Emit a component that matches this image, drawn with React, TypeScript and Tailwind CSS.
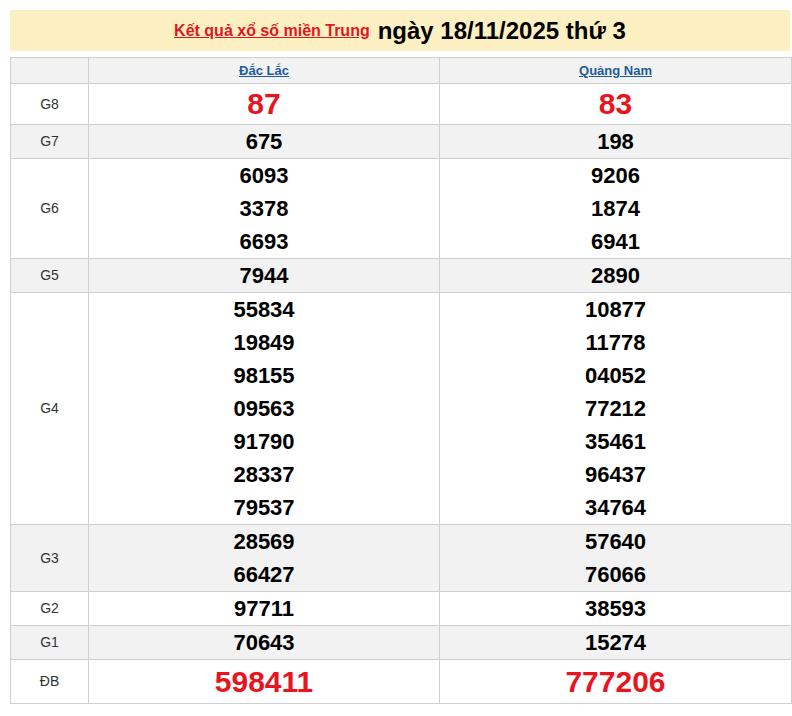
import React from "react";

const rows: { label: string; a: string[]; b: string[]; big?: boolean; bg: boolean }[] = [
  { label: "G8", a: ["87"], b: ["83"], big: true, bg: false },
  { label: "G7", a: ["675"], b: ["198"], bg: true },
  { label: "G6", a: ["6093", "3378", "6693"], b: ["9206", "1874", "6941"], bg: false },
  { label: "G5", a: ["7944"], b: ["2890"], bg: true },
  {
    label: "G4",
    a: ["55834", "19849", "98155", "09563", "91790", "28337", "79537"],
    b: ["10877", "11778", "04052", "77212", "35461", "96437", "34764"],
    bg: false,
  },
  { label: "G3", a: ["28569", "66427"], b: ["57640", "76066"], bg: true },
  { label: "G2", a: ["97711"], b: ["38593"], bg: false },
  { label: "G1", a: ["70643"], b: ["15274"], bg: true },
];

function Cell({ nums, big }: { nums: string[]; big?: boolean }) {
  return (
    <td className="border border-[#cfcfcf] p-0 text-center">
      {nums.map((n, i) =>
        big ? (
          <div key={i} className="text-[30px] leading-[40px] font-bold text-[#e8141e]">
            {n}
          </div>
        ) : (
          <div key={i} className="text-[22px] leading-[33px] font-bold text-black">
            {n}
          </div>
        )
      )}
    </td>
  );
}

export default function App() {
  return (
    <main className="min-h-screen bg-white pt-[10px] px-[10px] font-['Liberation_Sans',Arial,sans-serif]">
      {/* Tiêu đề */}
      <div className="w-[780px] h-[41px] bg-[#fcefc2] flex items-center justify-center gap-[8px]">
        <a href="#" className="text-[16px] font-bold text-[#e3161e] underline">
          Kết quả xổ số miền Trung
        </a>
        <span className="text-[24px] font-bold text-black">ngày 18/11/2025 thứ 3</span>
      </div>

      {/* Bảng kết quả */}
      <table className="mt-[6px] w-[781px] border-collapse table-fixed">
        <colgroup>
          <col className="w-[78px]" />
          <col className="w-[351px]" />
          <col className="w-[352px]" />
        </colgroup>
        <thead>
          <tr className="bg-[#f2f2f2] h-[26px]">
            <th className="border border-[#cfcfcf] p-0"></th>
            <th className="border border-[#cfcfcf] p-0 text-[13px] leading-[25px] font-bold">
              <a href="#" className="text-[#1b5c9c] underline">Đắc Lắc</a>
            </th>
            <th className="border border-[#cfcfcf] p-0 text-[13px] leading-[25px] font-bold">
              <a href="#" className="text-[#1b5c9c] underline">Quảng Nam</a>
            </th>
          </tr>
        </thead>
        <tbody>
          {rows.map((r) => (
            <tr key={r.label} className={r.bg ? "bg-[#f2f2f2]" : "bg-white"}>
              <td className="border border-[#cfcfcf] p-0 text-center text-[14px] text-[#333]">{r.label}</td>
              <Cell nums={r.a} big={r.big} />
              <Cell nums={r.b} big={r.big} />
            </tr>
          ))}
          <tr className="bg-white">
            <td className="border border-[#cfcfcf] p-0 text-center text-[14px] text-[#333]">ĐB</td>
            <td className="border border-[#cfcfcf] p-0 text-center">
              <div className="text-[30px] leading-[43px] font-bold text-[#e8141e]">598411</div>
            </td>
            <td className="border border-[#cfcfcf] p-0 text-center">
              <div className="text-[30px] leading-[43px] font-bold text-[#e8141e]">777206</div>
            </td>
          </tr>
        </tbody>
      </table>
    </main>
  );
}
